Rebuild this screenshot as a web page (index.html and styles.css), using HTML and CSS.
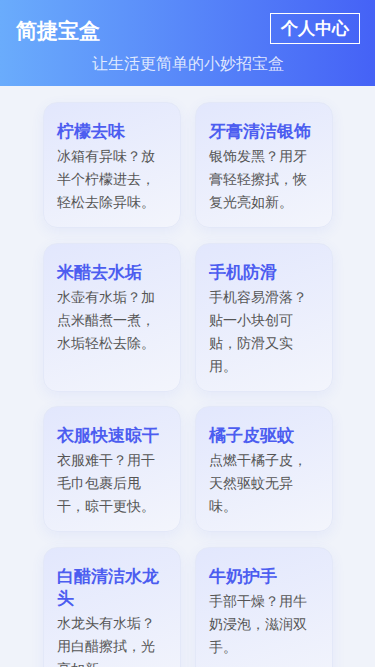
FILE: index.html
```html
<!DOCTYPE html>
<html>
<head>
<meta charset="utf-8">
<meta name="viewport" content="width=device-width, initial-scale=1">
<title>简捷宝盒</title>
<link rel="stylesheet" href="styles.css">
</head>
<body>
<header class="header">
  <div class="header-row">
    <h1 class="brand">简捷宝盒</h1>
    <button class="profile-btn">个人中心</button>
  </div>
  <p class="tagline">让生活更简单的小妙招宝盒</p>
</header>
<main class="tips">
  <article class="card"><h2 class="card-title">柠檬去味</h2><p class="card-text">冰箱有异味？放半个柠檬进去，轻松去除异味。</p></article>
  <article class="card"><h2 class="card-title">牙膏清洁银饰</h2><p class="card-text">银饰发黑？用牙膏轻轻擦拭，恢复光亮如新。</p></article>
  <article class="card"><h2 class="card-title">米醋去水垢</h2><p class="card-text">水壶有水垢？加点米醋煮一煮，水垢轻松去除。</p></article>
  <article class="card"><h2 class="card-title">手机防滑</h2><p class="card-text">手机容易滑落？贴一小块创可贴，防滑又实用。</p></article>
  <article class="card"><h2 class="card-title">衣服快速晾干</h2><p class="card-text">衣服难干？用干毛巾包裹后甩干，晾干更快。</p></article>
  <article class="card"><h2 class="card-title">橘子皮驱蚊</h2><p class="card-text">点燃干橘子皮，天然驱蚊无异味。</p></article>
  <article class="card"><h2 class="card-title">白醋清洁水龙头</h2><p class="card-text">水龙头有水垢？用白醋擦拭，光亮如新。</p></article>
  <article class="card"><h2 class="card-title">牛奶护手</h2><p class="card-text">手部干燥？用牛奶浸泡，滋润双手。</p></article>
</main>
</body>
</html>
```
FILE: styles.css
```css
* { box-sizing: border-box; }
html, body { margin: 0; padding: 0; }
body {
  background: #f0f3fa;
  font-family: "DejaVu Sans", sans-serif;
  color: #555;
}
.header {
  background: linear-gradient(to right, #6aacfc, #4562f6);
  padding: 13px 15px 11px 16px;
  color: #fff;
}
.header-row {
  display: flex;
  justify-content: space-between;
  align-items: center;
}
.brand {
  margin: 0;
  font-size: 20.5px;
  line-height: 28px;
  font-weight: 700;
  position: relative;
  top: 2px;
}
.profile-btn {
  background: transparent;
  border: 1px solid #fff;
  color: #fff;
  font-family: inherit;
  font-size: 17px;
  font-weight: 700;
  line-height: 21px;
  padding: 4px 10px;
  border-radius: 0;
}
.tagline {
  margin: 9px 0 0;
  text-align: center;
  font-size: 16.4px;
  line-height: 22px;
  color: rgba(255,255,255,0.82);
}
.tips {
  width: 290px;
  margin: 16px auto;
  display: grid;
  grid-template-columns: 1fr 1fr;
  gap: 14.5px 14px;
  align-items: start;
}
.card {
  background: linear-gradient(160deg, #e2e7fd 0%, #f3f5fc 100%);
  border: 1px solid #e3e8f8;
  border-radius: 14px;
  box-shadow: 0 4px 14px rgba(74, 99, 240, 0.07);
  padding: 17px 13px 13px;
  height: 100%;
}
.card-title {
  margin: 0 0 3px;
  font-size: 17px;
  line-height: 22px;
  font-weight: 700;
  color: #4c5df0;
}
.card-text {
  margin: 0;
  font-size: 14.4px;
  line-height: 23px;
  color: #555;
}
```
